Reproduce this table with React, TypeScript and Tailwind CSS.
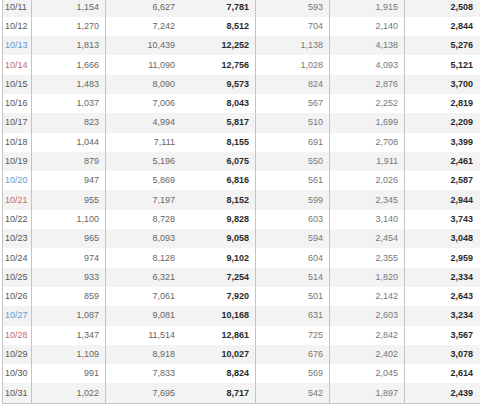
import React from "react";

const rows: string[][] = [
  ["10/11", "1,154", "6,627", "7,781", "593", "1,915", "2,508"],
  ["10/12", "1,270", "7,242", "8,512", "704", "2,140", "2,844"],
  ["10/13", "1,813", "10,439", "12,252", "1,138", "4,138", "5,276"],
  ["10/14", "1,666", "11,090", "12,756", "1,028", "4,093", "5,121"],
  ["10/15", "1,483", "8,090", "9,573", "824", "2,876", "3,700"],
  ["10/16", "1,037", "7,006", "8,043", "567", "2,252", "2,819"],
  ["10/17", "823", "4,994", "5,817", "510", "1,699", "2,209"],
  ["10/18", "1,044", "7,111", "8,155", "691", "2,708", "3,399"],
  ["10/19", "879", "5,196", "6,075", "550", "1,911", "2,461"],
  ["10/20", "947", "5,869", "6,816", "561", "2,026", "2,587"],
  ["10/21", "955", "7,197", "8,152", "599", "2,345", "2,944"],
  ["10/22", "1,100", "8,728", "9,828", "603", "3,140", "3,743"],
  ["10/23", "965", "8,093", "9,058", "594", "2,454", "3,048"],
  ["10/24", "974", "8,128", "9,102", "604", "2,355", "2,959"],
  ["10/25", "933", "6,321", "7,254", "514", "1,820", "2,334"],
  ["10/26", "859", "7,061", "7,920", "501", "2,142", "2,643"],
  ["10/27", "1,087", "9,081", "10,168", "631", "2,603", "3,234"],
  ["10/28", "1,347", "11,514", "12,861", "725", "2,842", "3,567"],
  ["10/29", "1,109", "8,918", "10,027", "676", "2,402", "3,078"],
  ["10/30", "991", "7,833", "8,824", "569", "2,045", "2,614"],
  ["10/31", "1,022", "7,695", "8,717", "542", "1,897", "2,439"],
];

const sat = new Set(["10/13", "10/20", "10/27"]);
const sun = new Set(["10/14", "10/21", "10/28"]);

export default function App() {
  return (
    <div
      className="w-[480px] h-[407px] overflow-hidden bg-white"
      style={{ fontFamily: '"Liberation Sans", Arial, sans-serif' }}
    >
      <div className="ml-[2px] -mt-[2.5px] w-[480px] border-l border-b border-[#c4c4c4] text-[9px] leading-none">
        {rows.map((r, i) => {
          const dateColor = sat.has(r[0])
            ? "text-[#5e9ad6]"
            : sun.has(r[0])
            ? "text-[#c8696b]"
            : "text-[#555555]";
          return (
            <div
              key={r[0]}
              className={`grid grid-cols-[29px_74px_75px_75px_74px_75px_78px] h-[19.3px] items-stretch ${
                i % 2 === 0 ? "bg-[#f3f3f3]" : "bg-white"
              }`}
            >
              <div className={`flex items-center pl-[2px] border-r border-[#c4c4c4] ${dateColor}`}>
                {r[0]}
              </div>
              <div className="flex items-center justify-end pr-[6px] border-r border-[#c4c4c4] text-[#666666]">
                {r[1]}
              </div>
              <div className="flex items-center justify-end pr-[6px] text-[#666666]">
                {r[2]}
              </div>
              <div className="flex items-center justify-end pr-[6px] border-r border-[#c4c4c4] font-bold text-[#2a2a2a]">
                {r[3]}
              </div>
              <div className="flex items-center justify-end pr-[6px] border-r border-[#c4c4c4] text-[#777777]">
                {r[4]}
              </div>
              <div className="flex items-center justify-end pr-[6px] border-r border-[#c4c4c4] text-[#777777]">
                {r[5]}
              </div>
              <div className="flex items-center justify-end pr-[10px] font-bold text-[#2a2a2a]">
                {r[6]}
              </div>
            </div>
          );
        })}
      </div>
    </div>
  );
}
